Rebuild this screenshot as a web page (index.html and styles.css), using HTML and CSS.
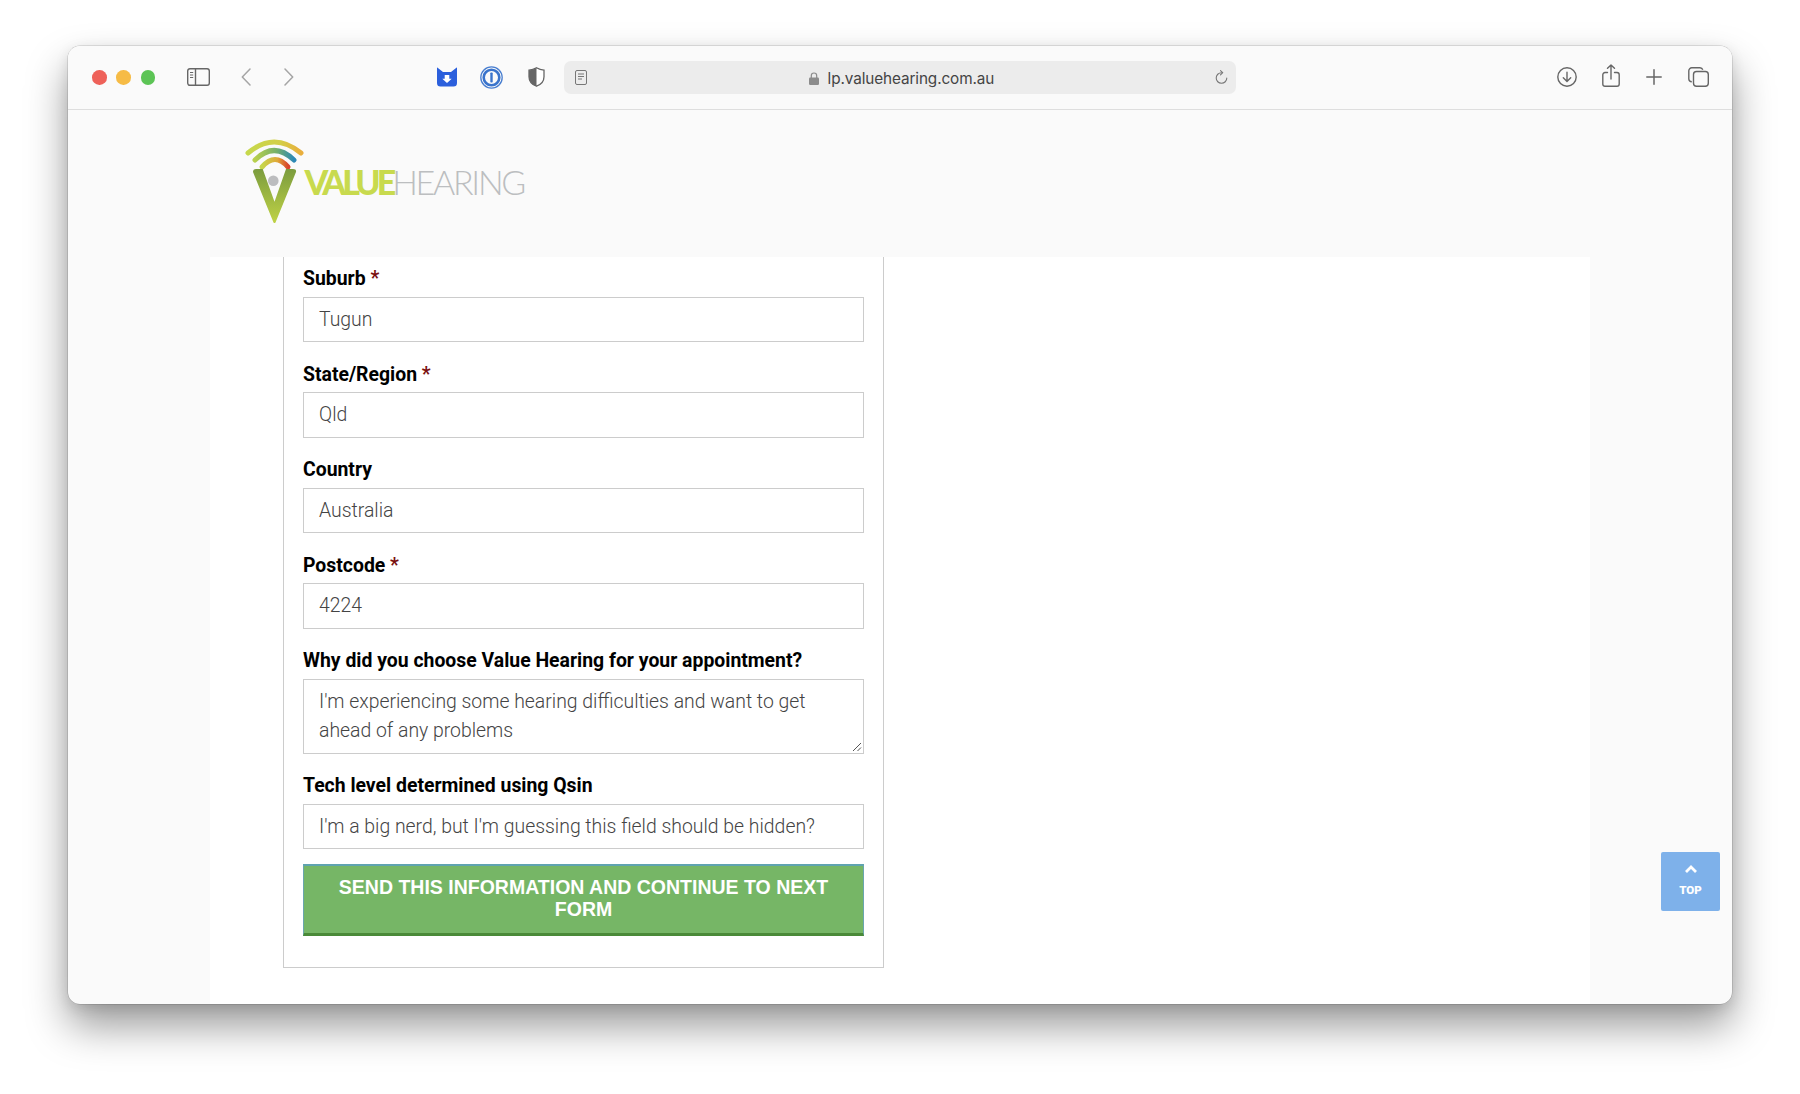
FILE: index.html
```html
<!DOCTYPE html>
<html lang="en">
<head>
<meta charset="utf-8">
<title>Value Hearing</title>
<link rel="stylesheet" href="styles.css">
</head>
<body>
<div class="window">
  <header class="toolbar">
    <div class="lights"><span class="light red"></span><span class="light yellow"></span><span class="light green"></span></div>
    <svg class="ic i-side" viewBox="0 0 23 18" fill="none" stroke="#666" stroke-width="1.4"><rect x=".7" y=".7" width="21.6" height="16.6" rx="2.2"/><path d="M8.500 .7v16.600"/><path d="M3 4.500h3.200M3 7h3.200M3 9.500h3.200" stroke-width="1.200"/></svg>
    <svg class="ic i-back" viewBox="0 0 10 18" fill="none" stroke="#a5a5a5" stroke-width="1.500" stroke-linecap="round" stroke-linejoin="round"><path d="M9 1 1.300 9 9 17"/></svg>
    <svg class="ic i-fwd" viewBox="0 0 10 18" fill="none" stroke="#a5a5a5" stroke-width="1.500" stroke-linecap="round" stroke-linejoin="round"><path d="M1 1l7.700 8L1 17"/></svg>
    <svg class="ic i-cat" viewBox="0 0 20 20"><path d="M.3 .5 6 5h8l5.700-4.500a.2 .2 0 0 1 .3 .2V16a3.500 3.500 0 0 1-3.500 3.500h-13A3.500 3.500 0 0 1 0 16V.7a.2 .2 0 0 1 .3-.2z" fill="#2b5fdc"/><path d="M7.700 8h4.600v3.800h2.400L10 16l-4.700-4.200h2.400z" fill="#fff"/></svg>
    <svg class="ic i-one" viewBox="0 0 23 23" fill="none"><circle cx="11.500" cy="11.500" r="10.700" stroke="#4a7fd0" stroke-width="1.300"/><circle cx="11.500" cy="11.500" r="7.800" stroke="#3a74cc" stroke-width="2.600"/><rect x="10.300" y="6.500" width="2.400" height="10" rx=".8" fill="#3a74cc"/></svg>
    <svg class="ic i-shield" viewBox="0 0 17 20"><path d="M8.500 .8c2.300 1.400 4.700 2.200 7.500 2.400v6.500c0 4.600-3 7.800-7.500 9.500C4 17.500 1 14.300 1 9.700V3.200C3.800 3 6.200 2.200 8.500 .8z" fill="#fff" stroke="#666" stroke-width="1.300"/><path d="M8.500 .8C6.200 2.200 3.800 3 1 3.200v6.500c0 4.600 3 7.800 7.500 9.500z" fill="#666"/></svg>
    <div class="url">
      <svg class="i-reader" viewBox="0 0 12 15" fill="none" stroke="#777" stroke-width="1"><rect x=".5" y=".5" width="11" height="14" rx="1.500"/><path d="M3 4h6M3 6.500h6M3 9h4"/></svg>
      <div class="addr">
        <svg class="i-lock" viewBox="0 0 10 13"><path d="M2.300 6V3.700a2.700 2.700 0 0 1 5.400 0V6" fill="none" stroke="#8c8c8c" stroke-width="1.200"/><rect y="5.500" width="10" height="7.500" rx="1.300" fill="#8c8c8c"/></svg>
        <span class="host">lp.valuehearing.com.au</span>
      </div>
      <svg class="i-reload" viewBox="0 0 13 15" fill="none" stroke="#777" stroke-width="1.100" stroke-linecap="round" stroke-linejoin="round"><path d="M6.500 2.700a5.300 5.300 0 1 0 5.300 5.300"/><path d="M5.500 .6 7.700 2.700 5.500 4.800"/></svg>
    </div>
    <svg class="ic i-down" viewBox="0 0 20 20" fill="none" stroke="#666" stroke-width="1.400" stroke-linecap="round" stroke-linejoin="round"><circle cx="10" cy="10" r="9.200"/><path d="M10 5.200v9M6.300 10.800 10 14.400l3.700-3.600"/></svg>
    <svg class="ic i-share" viewBox="0 0 18 23" fill="none" stroke="#666" stroke-width="1.400" stroke-linecap="round" stroke-linejoin="round"><path d="M5.500 8.500H3a2.200 2.200 0 0 0-2.200 2.200v9.600A2.200 2.200 0 0 0 3 22.300h12a2.200 2.200 0 0 0 2.200-2.200v-9.400A2.200 2.200 0 0 0 15 8.500h-2.500"/><path d="M9 15V1M5.500 4.300 9 .9l3.500 3.400"/></svg>
    <svg class="ic i-plus" viewBox="0 0 16 16" fill="none" stroke="#666" stroke-width="1.500" stroke-linecap="round"><path d="M8 .8v14.400M.8 8h14.400"/></svg>
    <svg class="ic i-tabs" viewBox="0 0 21 20" fill="none" stroke="#666" stroke-width="1.400"><path d="M3.800 14.800A3 3 0 0 1 .8 12V3.800a3 3 0 0 1 3-3H12a3 3 0 0 1 2.800 2"/><rect x="5.500" y="4.500" width="14.800" height="14.800" rx="3"/></svg>
  </header>

  <div class="page">
    <div class="site-head">
      <svg class="logo-mark" viewBox="0 0 60 88" fill="none" stroke-linecap="round">
        <defs>
          <linearGradient id="a1" x1="0" x2="1" y1="0" y2="0"><stop offset="0" stop-color="#c6d84c"/><stop offset=".6" stop-color="#d3cf48"/><stop offset="1" stop-color="#e9ae3c"/></linearGradient>
          <linearGradient id="a2" x1="0" x2="1" y1="0" y2="0"><stop offset="0" stop-color="#b8d04c"/><stop offset=".55" stop-color="#76b06a"/><stop offset="1" stop-color="#2c88b6"/></linearGradient>
          <linearGradient id="a3" x1="0" x2="1" y1="0" y2="0"><stop offset="0" stop-color="#c6d64a"/><stop offset=".6" stop-color="#e0a838"/><stop offset="1" stop-color="#d8452c"/></linearGradient>
          <linearGradient id="vg" x1="0" x2="0" y1="0" y2="1"><stop offset="0" stop-color="#7b9c3e"/><stop offset="1" stop-color="#bfd245"/></linearGradient>
        </defs>
        <path d="M3 15Q29-7 56 15" stroke="url(#a1)" stroke-width="5"/>
        <path d="M10 22Q29 3 49 22" stroke="url(#a2)" stroke-width="5"/>
        <path d="M17 29Q30 14 43 29" stroke="url(#a3)" stroke-width="5"/>
        <path d="M8 34Q8 31 11 31L17.700 31 29.500 63.700 41 31 48 31Q51.500 31 51 34L30.500 84.500Q29.500 85.500 28.500 84.500Z" fill="url(#vg)"/>
        <circle cx="28.300" cy="42.700" r="5.300" fill="#bcbdbf"/>
      </svg>
      <div class="logo-text"><span class="lt-value">VALUE</span><span class="lt-hearing">HEARING</span></div>
    </div>

    <main class="column">
      <form class="card">
        <div class="field">
          <label class="lbl">Suburb <em class="req">*</em></label>
          <div class="input">Tugun</div>
        </div>
        <div class="field">
          <label class="lbl">State/Region <em class="req">*</em></label>
          <div class="input">Qld</div>
        </div>
        <div class="field">
          <label class="lbl">Country</label>
          <div class="input">Australia</div>
        </div>
        <div class="field">
          <label class="lbl">Postcode <em class="req">*</em></label>
          <div class="input">4224</div>
        </div>
        <div class="field tight">
          <label class="lbl">Why did you choose Value Hearing for your appointment?</label>
          <div class="input area">I'm experiencing some hearing difficulties and want to get ahead of any problems
            <svg class="grip" viewBox="0 0 10 10" fill="none" stroke="#555" stroke-width="1"><path d="M1 9 9 1M5.500 9 9 5.500"/></svg>
          </div>
        </div>
        <div class="field">
          <label class="lbl">Tech level determined using Qsin</label>
          <div class="input">I'm a big nerd, but I'm guessing this field should be hidden?</div>
        </div>
        <div class="submit">SEND THIS INFORMATION AND CONTINUE TO NEXT FORM</div>
      </form>
    </main>
  </div>

  <a class="totop">
    <svg class="totop-ic" viewBox="0 0 12 8" fill="none" stroke="#fff" stroke-width="2.800"><path d="M1 7l5-5 5 5"/></svg>
    <span>TOP</span>
  </a>
</div>
</body>
</html>
```
FILE: styles.css
```css
* { box-sizing: border-box; }
html, body { margin: 0; height: 100%; background: #fff; }
body { padding: 45.500px 0 0 67.500px; overflow: hidden; font-family: Roboto, "Liberation Sans", sans-serif; }

.window {
  position: relative;
  width: 1664px;
  height: 958.500px;
  display: flex;
  flex-direction: column;
  background: #fafafa;
  border-radius: 12px;
  overflow: hidden;
  box-shadow: 0 0 0 .5px rgba(0,0,0,.2), 0 22px 42px rgba(0,0,0,.4), 0 4px 14px rgba(0,0,0,.1);
}

.toolbar {
  flex: none;
  height: 64.500px;
  display: flex;
  align-items: center;
  padding: 0 0 0 24.500px;
  background: #fafafa;
  border-bottom: 1px solid #dedede;
}
.ic { flex: none; display: block; }
.lights { display: flex; gap: 9.800px; }
.light { width: 14.600px; height: 14.600px; border-radius: 50%; }
.red { background: #ee6159; }
.yellow { background: #f6bb45; }
.green { background: #5cc455; }

.i-side { width: 23px; height: 18px; margin-left: 32px; }
.i-back { width: 10px; height: 18px; margin-left: 31px; }
.i-fwd { width: 10px; height: 18px; margin-left: 33px; }
.i-cat { width: 20px; height: 20px; margin-left: 143px; }
.i-one { width: 23px; height: 23px; margin-left: 23px; }
.i-shield { width: 17px; height: 20px; margin-left: 24.500px; }
.i-down { width: 20px; height: 20px; margin-left: 321px; }
.i-share { width: 18px; height: 23px; margin-left: 25px; margin-top: -3px; }
.i-plus { width: 16px; height: 16px; margin-left: 26px; }
.i-tabs { width: 21px; height: 20px; margin-left: 26px; }

.url {
  flex: none;
  width: 672px;
  height: 33px;
  margin-left: 19px;
  padding: 0 8px 0 11px;
  display: grid;
  grid-template-columns: 1fr auto 1fr;
  align-items: center;
  background: #ececec;
  border-radius: 7px;
}
.i-reader { width: 12px; height: 15px; }
.i-reload { width: 13px; height: 15px; justify-self: end; }
.addr { display: flex; align-items: center; gap: 9px; padding-top: 3px; }
.i-lock { width: 10px; height: 13px; }
.host { font: 400 15.300px/20px Inter, Roboto, sans-serif; color: #444; letter-spacing: -.1px; }

.page { flex: 1; min-height: 0; }
.site-head { height: 147.400px; padding: 28px 0 0 177px; display: flex; align-items: flex-start; }
.logo-mark { width: 60px; height: 88px; flex: none; }
.logo-text { margin: 24px 0 0 0; font-family: Lato, "Open Sans", sans-serif; font-size: 34px; line-height: 40px; white-space: nowrap; }
.lt-value { font-weight: 900; color: #c8da4e; letter-spacing: -4px; }
.lt-hearing { font-weight: 300; color: #bcbec0; letter-spacing: -2.300px; }

.column { width: 1380px; height: 800px; margin: 0 auto; background: #fff; padding-left: 73.500px; }
.card {
  width: 601px;
  padding: 5px 19px 31px;
  background: #fff;
  border: 1px solid #ccc;
  border-top: 0;
}
.field { margin-bottom: 15.500px; }
.field.tight { margin-bottom: 14.500px; }
.lbl { display: block; height: 30px; margin-bottom: 4.600px; font-size: 19.400px; line-height: 33.400px; font-weight: 700; color: #000; }
.req { font-style: normal; color: #7a1010; }
.input {
  position: relative;
  height: 45.400px;
  padding: 0 15px;
  border: 1px solid #ccc;
  background: #fff;
  font-size: 19.400px;
  font-weight: 300;
  line-height: 43px;
  color: #444;
}
.area { height: 75.500px; padding-top: 8px; line-height: 28.700px; white-space: normal; }
.grip { position: absolute; right: 1px; bottom: 1px; width: 10px; height: 10px; }
.submit {
  height: 72px;
  padding: 11px 20px 0;
  background: #76b666;
  border: 1px solid #6aa6ae;
  border-top: 2px solid #5fa3b0;
  border-bottom: 3px solid #4a8a38;
  text-align: center;
  font-family: "Liberation Sans", Arial, sans-serif;
  font-weight: 700;
  font-size: 19.500px;
  line-height: 21.700px;
  color: #fff;
}

.totop {
  position: absolute;
  left: 1593.500px;
  top: 806.500px;
  width: 59px;
  height: 59px;
  border-radius: 2px;
  background: #7eb1ea;
  display: flex;
  flex-direction: column;
  align-items: center;
  padding-top: 13px;
  color: #fff;
  font-size: 11.500px;
  font-weight: 900;
  line-height: 14px;
}
.totop-ic { width: 12px; height: 8px; margin-bottom: 10px; }
```
